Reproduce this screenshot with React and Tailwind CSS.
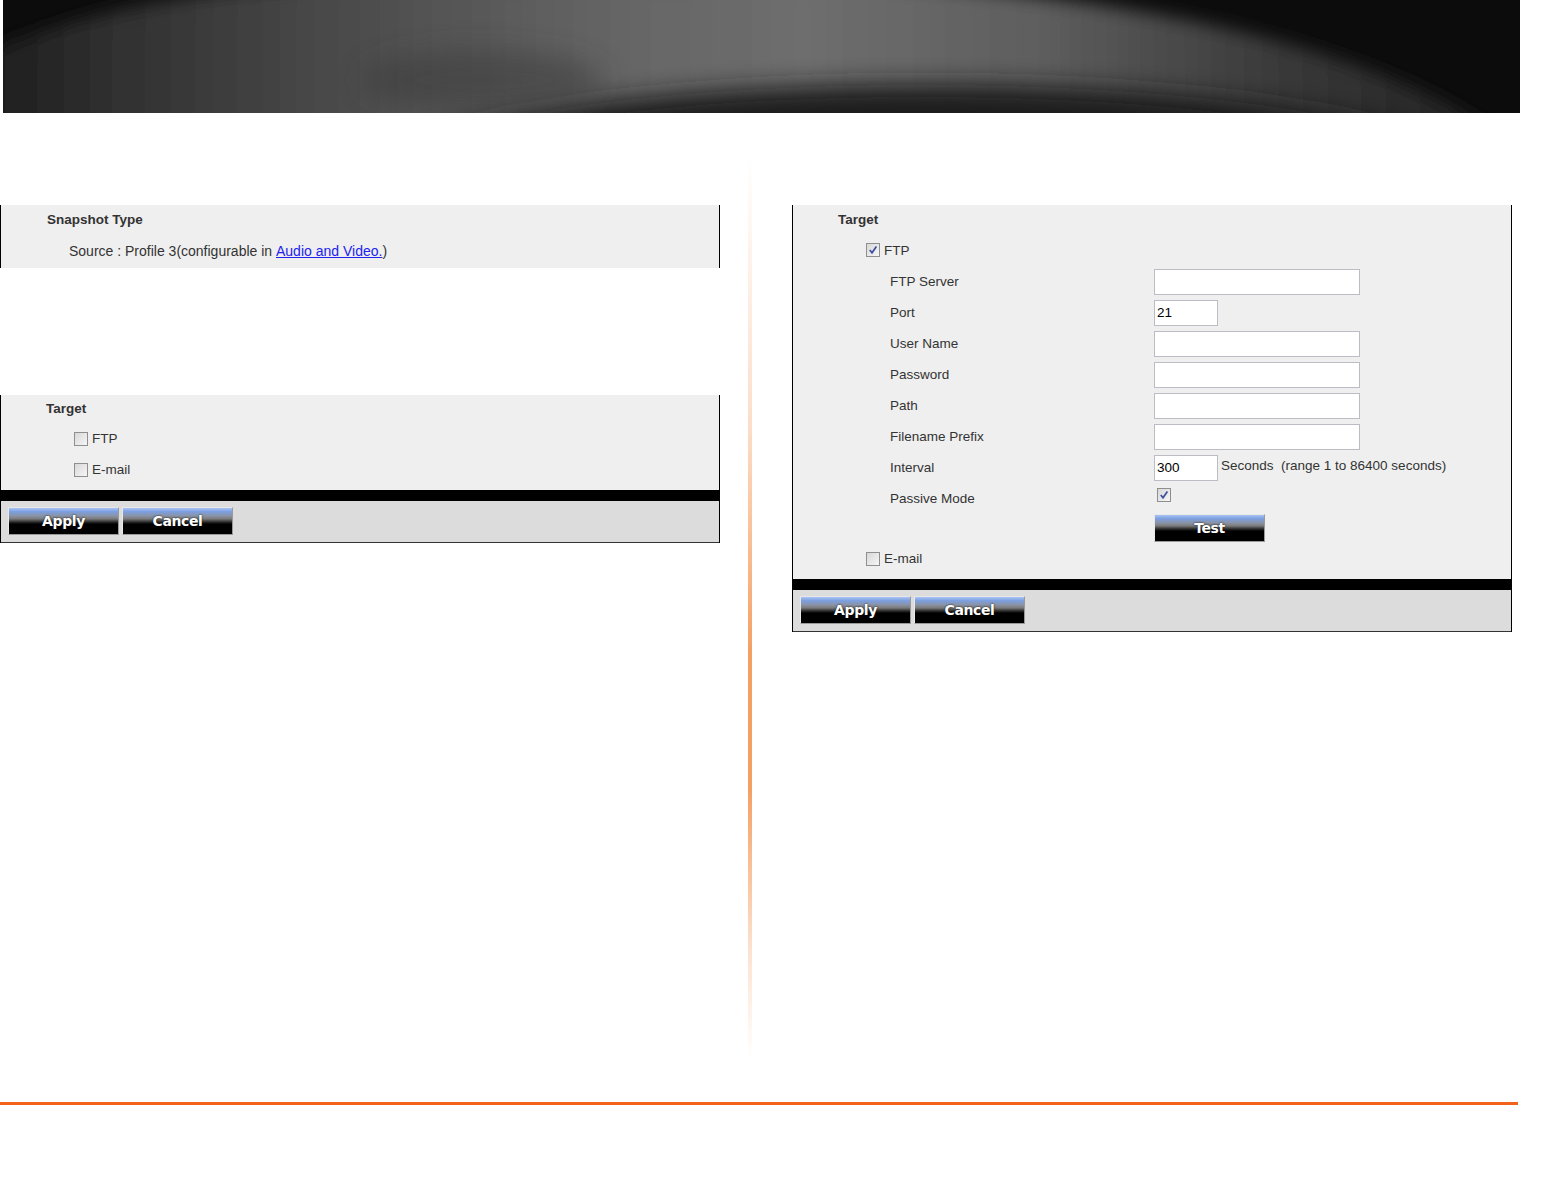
import React from 'react';

const FONT = "font-['Liberation_Sans',Arial,sans-serif]";

function Header() {
  return (
    <div className="ml-[3px] w-[1517px] h-[113px] overflow-hidden bg-black">
      <svg width="1517" height="113" viewBox="0 0 1517 113">
        <defs>
          <filter id="b1" x="-10%" y="-60%" width="120%" height="220%"><feGaussianBlur stdDeviation="9" /></filter>
          <filter id="b2" x="-10%" y="-60%" width="120%" height="220%"><feGaussianBlur stdDeviation="13" /></filter>
          <linearGradient id="band" x1="0" y1="0" x2="1" y2="0">
            <stop offset="0" stopColor="#161616" />
            <stop offset="0.1" stopColor="#2e2e2e" />
            <stop offset="0.25" stopColor="#4a4a4a" />
            <stop offset="0.42" stopColor="#646464" />
            <stop offset="0.55" stopColor="#6e6e6e" />
            <stop offset="0.7" stopColor="#5e5e5e" />
            <stop offset="0.85" stopColor="#3a3a3a" />
            <stop offset="1" stopColor="#1e1e1e" />
          </linearGradient>
        </defs>
        <rect width="1517" height="113" fill="#0c0c0c" />
        <path d="M -60 140 L -60 70 Q 120 -15 380 -20 L 860 -20 Q 1320 10 1505 140 Z" fill="url(#band)" filter="url(#b1)" />
        <ellipse cx="920" cy="185" rx="560" ry="100" fill="#1e1e1e" filter="url(#b2)" />
        <ellipse cx="480" cy="80" rx="120" ry="30" fill="#3a3a3a" opacity="0.5" filter="url(#b2)" />
      </svg>
    </div>
  );
}

function Checkbox({ checked }) {
  return (
    <span className="inline-flex w-[14px] h-[14px] border border-[#8e8f8f] bg-[linear-gradient(135deg,#d8d8d8,#f6f6f6)] items-center justify-center shrink-0">
      {checked && (
        <svg width="10" height="10" viewBox="0 0 10 10">
          <path d="M1.8 5 L4 7.8 L8.4 1.4" stroke="#3c4fa0" strokeWidth="1.7" fill="none" />
        </svg>
      )}
    </span>
  );
}

function Btn({ children }) {
  return (
    <button className="w-[111px] h-[28px] border border-t-[#e8e8e8] border-l-[#e8e8e8] border-r-[#9a9a9a] border-b-[#9a9a9a] bg-[linear-gradient(to_bottom,#a9c4f4_0%,#7c9fe0_14%,#8a94a8_30%,#7a7a7a_42%,#2a2a2a_54%,#000_62%,#000_100%)] text-white font-bold text-[14px] font-['DejaVu_Sans',Verdana,sans-serif] tracking-[-0.4px] flex items-center justify-center [text-shadow:0_0_2px_#000]">
      {children}
    </button>
  );
}

function Footer() {
  return (
    <div>
      <div className="h-[11px] bg-black" />
      <div className="h-[42px] bg-[#dcdcdc] border-b border-[#333] pt-[6px] pl-[7px] flex gap-[3px] items-start">
        <Btn>Apply</Btn>
        <Btn>Cancel</Btn>
      </div>
    </div>
  );
}

function Input({ w = 'w-[206px]', value = '' }) {
  return (
    <div className={`${w} h-[26px] border border-[#bcbcc4] bg-white pl-[2px] pt-[2px] flex items-center text-[13.5px] text-black`}>
      {value}
    </div>
  );
}

const FIELDS = ['FTP Server', 'Port', 'User Name', 'Password', 'Path', 'Filename Prefix', 'Interval', 'Passive Mode'];

function LeftCol() {
  return (
    <div className="w-[720px] pt-[92px]">
      <div className="h-[63px] bg-[#efefef] border-l border-r border-black">
        <div className="h-[29px] flex items-center pl-[46px] pt-[2px] font-bold text-[#333]">Snapshot Type</div>
        <div className="h-[31px] flex items-center pl-[68px] pt-[3px] text-[14px] text-[#333]">
          Source : Profile 3(configurable in&nbsp;<span className="text-[#2222ee] underline">Audio and Video.</span>)
        </div>
      </div>
      <div className="mt-[127px] border-l border-r border-black">
        <div className="bg-[#efefef] h-[95px]">
          <div className="h-[28px] flex items-center pl-[45px] pt-[1px] font-bold text-[#333]">Target</div>
          <div className="h-[31px] flex items-center pl-[73px] gap-[4px] text-[#333]"><Checkbox /><span className="pt-[2px]">FTP</span></div>
          <div className="h-[31px] flex items-center pl-[73px] gap-[4px] text-[#333]"><Checkbox /><span className="pt-[2px]">E-mail</span></div>
        </div>
        <Footer />
      </div>
    </div>
  );
}

function RightCol() {
  return (
    <div className="w-[720px] pt-[92px]">
      <div className="border-l border-r border-black">
        <div className="bg-[#efefef] h-[374px]">
          <div className="h-[29px] flex items-center pl-[45px] pt-[2px] font-bold text-[#333]">Target</div>
          <div className="h-[32px] flex items-center pl-[73px] gap-[4px] text-[#333]"><Checkbox checked /><span className="pt-[2px]">FTP</span></div>
          {FIELDS.map(f => (
            <div key={f} className="h-[31px] flex items-center text-[#333]">
              <div className="w-[361px] pl-[97px] pt-[2px]">{f}</div>
              {f === 'Port' && <Input w="w-[64px]" value="21" />}
              {f === 'Interval' && (
                <>
                  <Input w="w-[64px]" value="300" />
                  <span className="ml-[3px] -mt-[3px] whitespace-pre">Seconds  (range 1 to 86400 seconds)</span>
                </>
              )}
              {f === 'Passive Mode' && <span className="ml-[3px] -mt-[5px]"><Checkbox checked /></span>}
              {!['Port', 'Interval', 'Passive Mode'].includes(f) && <Input />}
            </div>
          ))}
          <div className="h-[29px] pl-[361px]"><Btn>Test</Btn></div>
          <div className="h-[31px] flex items-center pl-[73px] gap-[4px] text-[#333]"><Checkbox /><span className="pt-[2px]">E-mail</span></div>
        </div>
        <Footer />
      </div>
    </div>
  );
}

export default function App() {
  return (
    <div className={`w-[1548px] h-[1200px] bg-white ${FONT} text-[13.5px]`}>
      <Header />
      <div className="flex h-[989px]">
        <LeftCol />
        <div className="w-[28px]" />
        <div className="w-[4px] mt-[42px] h-[905px] bg-[linear-gradient(to_bottom,rgba(246,160,100,0)_0%,rgba(246,160,100,0.35)_30%,#f4a064_55%,#f4a064_70%,rgba(246,160,100,0.3)_88%,rgba(246,160,100,0)_100%)]" />
        <div className="w-[40px]" />
        <RightCol />
      </div>
      <div className="w-[1518px] h-[3px] bg-[#f2621a]" />
    </div>
  );
}
